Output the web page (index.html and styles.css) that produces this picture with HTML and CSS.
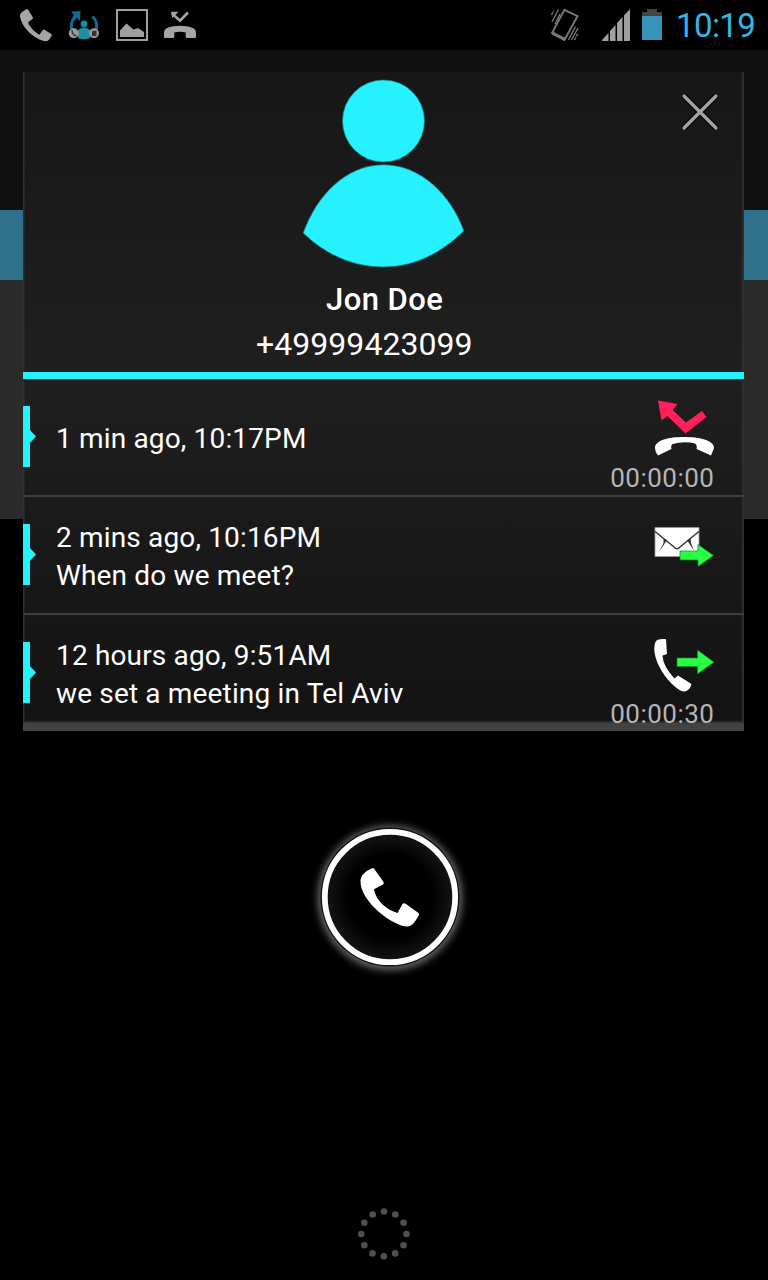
FILE: index.html
```html
<!DOCTYPE html>
<html lang="en">
<head>
<meta charset="utf-8">
<title>Call summary</title>
<link rel="stylesheet" href="styles.css">
</head>
<body>
<div class="screen">
  <header class="status">
    <div class="notices">
      <svg width="36" height="36" viewBox="0 0 36 36"><path fill="#a5a5a5" d="M8.3 1.2Q9.2.6 10 1.6L14.8 9.2Q15.3 10.3 14.4 11L10.8 13.8Q9.8 14.8 10.6 16.2Q14 22 20.3 26.2Q21.5 26.8 22.2 25.7L24.6 22.2Q25.5 21.2 26.5 21.8L33.2 26Q34.3 26.8 33.6 27.8Q30.8 33.5 27.4 33.3C15 31 3.5 18.5 2 8.500C1.700 5 5 3 8.300 1.200Z"/></svg>
      <svg width="36" height="36" viewBox="0 0 36 36"><g fill="none" stroke="#126ba0" stroke-width="3"><path d="M9.500 8.500Q3 15 6.500 23.500"/><path stroke="#146a91" d="M26.500 8.500Q33 15 29.500 23.500"/></g><path fill="#126ba0" d="M5 3.500L14.500 3.300L14 13L11 9.800L8 12.500L6.500 9L8 7Z"/><circle cx="18" cy="16" r="3.400" fill="#1789a8"/><path fill="#1d8fa6" d="M12 22Q18 17.500 24 22V30Q18 32.500 12 30Z"/><circle cx="7.800" cy="25.300" r="5" fill="#999"/><circle cx="28" cy="25.300" r="5" fill="#999"/><path d="M6 22Q6 27 10.300 28" fill="none" stroke="#444" stroke-width="1.500"/><rect x="26" y="22.800" width="4.500" height="5.200" fill="#333"/></svg>
      <svg width="36" height="36" viewBox="0 0 36 36"><rect x="3" y="2" width="30" height="30" fill="none" stroke="#a0a0a0" stroke-width="2"/><path fill="#a0a0a0" d="M6 29V22.500L12.500 15.500L19.500 21.500L24 20L30 24V29Z"/></svg>
      <svg width="36" height="36" viewBox="0 0 36 36"><path fill="#a5a5a5" d="M2 29V24Q3 18 18 17.800Q33 18 34 24V29Q34 30 33 30H25Q24 30 23.700 29V24.500Q18 23 12.300 24.500V29Q12 30 11 30H3Q2 30 2 29Z"/><path d="M10 5.500L18 12.700L26 4.500" fill="none" stroke="#a5a5a5" stroke-width="2.600"/><path fill="#a5a5a5" d="M9.200 3.800H16.500L10.200 10Z"/></svg>
    </div>
    <div class="system">
      <svg width="30" height="34" viewBox="0 0 30 34"><path fill="none" stroke="#777" stroke-width="2" d="M14.500 1.800L27.500 8.200L14.500 32L2 25Z"/><path fill="#777" d="M2 23L14.500 29.500L17.500 27.500L14.500 33L2 26.500Z"/><path stroke="#777" stroke-width="1.400" stroke-dasharray="3 1" d="M1.500 7L4 2.500M24.500 32L28 25"/><path stroke="#777" stroke-width="1.400" d="M2 14L8.500 1.500M5 16L10 6M18.500 32L25.500 18.500M21.500 32L28 20"/></svg>
      <svg class="signal" width="28" height="32" viewBox="0 0 28 32"><path fill="#a0a0a0" d="M0 32V31L6.500 24V32ZM8 32V22L13.500 16V32ZM15 32V14L20.500 8V32ZM22 32V6.500L28 0V32Z"/></svg>
      <svg class="battery" width="20" height="31" viewBox="0 0 20 31"><path fill="#454545" d="M0 3H5V0H15V3H20V8H0Z"/><path fill="#3793b7" d="M0 7H20V31H0Z"/></svg>
      <span class="clock">10:19</span>
    </div>
  </header>
  <main class="stage">
    <section class="card">
      <div class="contact">
        <svg class="avatar" width="164" height="190" viewBox="0 0 164 190"><g fill="#26f2ff" stroke="#168790" stroke-width=".7"><circle cx="81.500" cy="43" r="41"/><path d="M81.500 86.800C119 87 149 117 161.800 153Q125 189 81 189Q36 188.500 1.200 155C15 117 44 87 81.500 86.800Z"/></g></svg>
        <svg class="close" width="44" height="44" viewBox="0 0 44 44"><path d="M6.500 6.500L37.500 37.500M37.500 6.500L6.500 37.500" fill="none" stroke="#090909" stroke-width="6" stroke-linecap="round"/><path d="M6 6L38 38M38 6L6 38" fill="none" stroke="#a2a2a2" stroke-width="3.300" stroke-linecap="round"/></svg>
        <div class="name">Jon Doe</div>
        <div class="number">+49999423099</div>
      </div>
      <ul class="log">
        <li class="entry">
          <svg class="marker" width="13" height="61" viewBox="0 0 13 61"><path fill="#26f2ff" d="M0 0H7V24L13 30.500L7 37V61H0Z"/></svg>
          <div class="info"><span>1 min ago, 10:17PM</span></div>
          <div class="meta">
            <svg width="60" height="60" viewBox="0 0 60 60"><path fill="#ff2157" d="M4 1.500L23.500 5L18.500 11L32 23.500L48 12L52.500 18L31.500 34.500L13.500 17L7.500 21.500Z"/><path fill="#fff" d="M1 49C1 41 15 38 30 38S60 41 60 49L57 56.500L42.500 50Q43.500 46 41 44.500Q30 42 18.500 45Q16.500 46.500 17.500 50L4 56.500Q1 53 1 49Z"/></svg>
            <span class="duration">00:00:00</span>
          </div>
        </li>
        <li class="entry">
          <svg class="marker" width="13" height="61" viewBox="0 0 13 61"><path fill="#26f2ff" d="M0 0H7V24L13 30.500L7 37V61H0Z"/></svg>
          <div class="info"><span>2 mins ago, 10:16PM</span><span>When do we meet?</span></div>
          <div class="meta">
            <svg width="60" height="60" viewBox="0 0 60 60"><path fill="#fff" stroke="#999" stroke-width=".8" d="M1 10.500H45V39.500H1Z"/><path fill="none" stroke="#333" stroke-width="1.400" d="M1 14.500L20 30Q23 33.500 26 30L45 14.500"/><path fill="#333" d="M9.500 21.500L13 23L5 35L9.500 26ZM36.500 21.500L33 23L40 34L37 26Z"/><path fill="#26ff42" stroke="#138522" stroke-width=".7" d="M26 34H44V27.500L59.500 38.500L44 49.500V43H26Z"/></svg>
          </div>
        </li>
        <li class="entry">
          <svg class="marker" width="13" height="61" viewBox="0 0 13 61"><path fill="#26f2ff" d="M0 0H7V24L13 30.500L7 37V61H0Z"/></svg>
          <div class="info"><span>12 hours ago, 9:51AM</span><span>we set a meeting in Tel Aviv</span></div>
          <div class="meta">
            <svg width="60" height="60" viewBox="0 0 60 60"><path fill="#fff" d="M3 5Q7 3.500 12 4L13 19L8.500 20.500C9 29 14 36 20.500 43.500L24 40.500L37.500 49Q36 55 31 56.500Q28 57 24 54C11 45 -3 23 1 8Z"/><path fill="#26ff42" stroke="#138522" stroke-width=".7" d="M23 23H43.500V15L60 27.200L43.500 39V31.500H23Z"/></svg>
            <span class="duration">00:00:30</span>
          </div>
        </li>
      </ul>
    </section>
    <div class="dial">
      <svg width="180" height="180" viewBox="0 0 180 180">
        <defs>
          <filter id="halo" x="-20%" y="-20%" width="140%" height="140%"><feGaussianBlur stdDeviation="4"/></filter>
          <radialGradient id="inside"><stop offset=".65" stop-color="#000"/><stop offset="1" stop-color="#161616"/></radialGradient>
        </defs>
        <circle cx="90" cy="91" r="67" fill="none" stroke="#858585" stroke-width="8" filter="url(#halo)"/>
        <circle cx="90" cy="90" r="69.500" fill="#111"/>
        <circle cx="90" cy="90" r="65.200" fill="url(#inside)" stroke="#fff" stroke-width="5.800"/>
        <path fill="#fff" d="M72 61.200Q73 60.500 74 61.500L83.500 75Q84.300 76.500 83 77.500L74 82.200C76 93 85 102 97.500 106L102.500 97Q104 95.500 106 97L118.500 106Q119.500 107 119 108C116 113 113 119.500 107 119.500C94 119.500 60 95 60.500 74C60.700 67 67 63.500 72 61.200Z"/>
      </svg>
    </div>
  </main>
  <footer class="ring">
    <svg width="54" height="54" viewBox="0 0 54 54"><g fill="#505050"><circle cx="27" cy="4.500" r="3.300"/><circle cx="38.300" cy="7.500" r="3.300"/><circle cx="46.600" cy="15.800" r="3.300"/><circle cx="49.500" cy="27" r="3.300"/><circle cx="46.500" cy="38.300" r="3.300"/><circle cx="38.200" cy="46.400" r="3.300"/><circle cx="26.800" cy="49.300" r="3.300"/><circle cx="15.500" cy="46.400" r="3.300"/><circle cx="7.300" cy="38.200" r="3.300"/><circle cx="4.200" cy="27" r="3.300"/><circle cx="7.300" cy="15.700" r="3.300"/><circle cx="15.700" cy="7.500" r="3.300"/></g></svg>
  </footer>
</div>
</body>
</html>
```
FILE: styles.css
```css
* { box-sizing: border-box; }
body { margin: 0; background: #000; color: #fff; font-family: Roboto, "Noto Sans", sans-serif; }
svg { display: block; flex: none; }
.screen { width: 768px; height: 1280px; display: flex; flex-direction: column; overflow: hidden; background: #000; }
.status { height: 50px; flex: none; display: flex; justify-content: space-between; padding: 0 13px 0 18px; }
.notices { display: flex; gap: 12px; padding-top: 8px; }
.system { display: flex; align-items: flex-start; padding-top: 8px; }
.signal { margin: 1px 0 0 22px; }
.battery { margin: 1px 0 0 12px; }
.clock { margin: -1px 0 0 14px; width: 79px; font-size: 33px; line-height: 38px; letter-spacing: -0.6px; color: #33b5e5; white-space: nowrap; }
.stage { flex: 1; padding: 22px 24px 0 23px; background: linear-gradient(#101010 160px, #2f708a 160px, #2f708a 230px, #2b2b2b 230px, #2b2b2b 469px, #000 469px); }
.card { height: 659px; padding: 0 2px 0 1px; background: linear-gradient(90deg, #303030 1px, transparent 2px, transparent 718px, #303030 720px), linear-gradient(#171717, #1f1f1f 46%, #131313); border-bottom: 8px solid #424242; box-shadow: inset 0 -2px 1px #303030; }
.contact { height: 307px; margin: 0 -2px 0 -1px; display: grid; grid-template-columns: 1fr auto 1fr; grid-template-rows: 205px 45px 50px; border-bottom: 7px solid #26f2ff; }
.avatar { grid-column: 2; margin: 6px 0 0; }
.close { grid-column: 3; justify-self: end; margin: 18px 22px 0 0; }
.name { grid-column: 1 / 4; justify-self: start; margin-left: 303px; font-size: 31px; font-weight: 500; line-height: 46px; letter-spacing: 0.45px; white-space: nowrap; }
.number { grid-column: 1 / 4; justify-self: start; margin-left: 233px; font-size: 32px; line-height: 44px; letter-spacing: 0.05px; white-space: nowrap; }
.log { margin: 0 -2px 0 -1px; padding: 0; list-style: none; }
.entry { height: 118px; display: flex; border-bottom: 2px solid #404040; }
.entry:last-child { height: 107px; border: 0; }
.marker { margin-top: 27px; }
.info { height: 118px; flex: 1; display: flex; flex-direction: column; justify-content: center; padding: 2px 0 0 20px; font-size: 28px; line-height: 38px; letter-spacing: 0.16px; white-space: nowrap; }
.meta { width: 110px; margin-right: 30px; display: flex; flex-direction: column; align-items: flex-end; padding-top: 20px; }
.duration { margin: 4px -0.5px 0 0; font-size: 26px; line-height: 30px; letter-spacing: 0.5px; color: #b5b5b5; }
.dial { display: flex; justify-content: center; margin: 76px 0 0 13px; }
.ring { height: 73px; flex: none; display: flex; justify-content: center; }
```
